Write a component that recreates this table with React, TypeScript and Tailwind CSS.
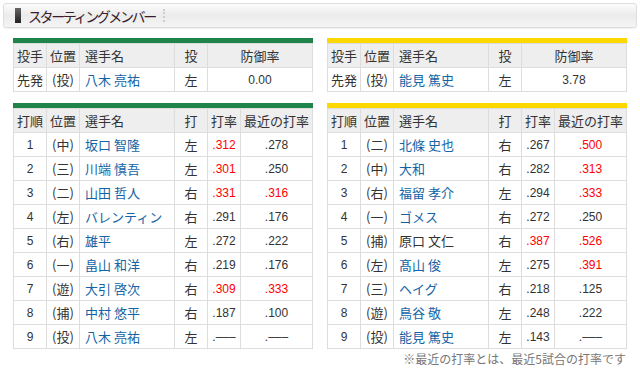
import React from "react";

type Batter = { no: number; pos: string; name: string; hand: string; avg: string; avgHot?: boolean; recent: string; recentHot?: boolean; purple?: boolean };

const jp = "font-['Noto_Sans_CJK_JP','Noto_Sans',sans-serif]";
const num = "font-['Liberation_Sans','Noto_Sans_CJK_JP',sans-serif] text-[12px]";

const swallows: Batter[] = [
  { no: 1, pos: "中", name: "坂口 智隆", hand: "左", avg: ".312", avgHot: true, recent: ".278" },
  { no: 2, pos: "三", name: "川端 慎吾", hand: "左", avg: ".301", avgHot: true, recent: ".250" },
  { no: 3, pos: "二", name: "山田 哲人", hand: "右", avg: ".331", avgHot: true, recent: ".316", recentHot: true },
  { no: 4, pos: "左", name: "バレンティン", hand: "右", avg: ".291", recent: ".176" },
  { no: 5, pos: "右", name: "雄平", hand: "左", avg: ".272", recent: ".222" },
  { no: 6, pos: "一", name: "畠山 和洋", hand: "右", avg: ".219", recent: ".176" },
  { no: 7, pos: "遊", name: "大引 啓次", hand: "右", avg: ".309", avgHot: true, recent: ".333", recentHot: true },
  { no: 8, pos: "捕", name: "中村 悠平", hand: "右", avg: ".187", recent: ".100" },
  { no: 9, pos: "投", name: "八木 亮祐", hand: "左", avg: ".–––", recent: ".–––" },
];

const tigers: Batter[] = [
  { no: 1, pos: "二", name: "北條 史也", hand: "右", avg: ".267", recent: ".500", recentHot: true },
  { no: 2, pos: "中", name: "大和", hand: "右", avg: ".282", recent: ".313", recentHot: true },
  { no: 3, pos: "右", name: "福留 孝介", hand: "左", avg: ".294", recent: ".333", recentHot: true },
  { no: 4, pos: "一", name: "ゴメス", hand: "右", avg: ".272", recent: ".250" },
  { no: 5, pos: "捕", name: "原口 文仁", hand: "右", avg: ".387", avgHot: true, recent: ".526", recentHot: true, purple: true },
  { no: 6, pos: "左", name: "髙山 俊", hand: "左", avg: ".275", recent: ".391", recentHot: true },
  { no: 7, pos: "三", name: "ヘイグ", hand: "右", avg: ".218", recent: ".125" },
  { no: 8, pos: "遊", name: "鳥谷 敬", hand: "左", avg: ".248", recent: ".222" },
  { no: 9, pos: "投", name: "能見 篤史", hand: "左", avg: ".143", recent: ".–––" },
];

const th = "h-[24px] border border-[#dddddd] bg-[#eeeeee] font-normal text-[#333] p-0";
const td = "h-[24px] border border-[#dddddd] bg-white text-[#333] p-0";

function PitcherTable({ bar, name, era }: { bar: string; name: string; era: string }) {
  return (
    <div className="w-[300px]">
      <div className={`h-[5px] ${bar}`} />
      <table className={`w-[300px] table-fixed border-collapse text-[13px] leading-none ${jp}`}>
        <colgroup>
          <col className="w-[33px]" />
          <col className="w-[33px]" />
          <col className="w-[95px]" />
          <col className="w-[33px]" />
          <col />
        </colgroup>
        <thead>
          <tr>
            <th className={`${th} text-center`}>投手</th>
            <th className={`${th} text-center`}>位置</th>
            <th className={`${th} text-left pl-[5px]`}>選手名</th>
            <th className={`${th} text-center`}>投</th>
            <th className={`${th} text-center`}>防御率</th>
          </tr>
        </thead>
        <tbody>
          <tr>
            <td className={`${td} text-center`}>先発</td>
            <td className={`${td} text-center`}>(投)</td>
            <td className={`${td} pl-[5px] text-[#1464a5]`}>{name}</td>
            <td className={`${td} text-center`}>左</td>
            <td className={`${td} text-center ${num}`}>{era}</td>
          </tr>
        </tbody>
      </table>
    </div>
  );
}

function LineupTable({ bar, rows }: { bar: string; rows: Batter[] }) {
  return (
    <div className="w-[300px]">
      <div className={`h-[5px] ${bar}`} />
      <table className={`w-[300px] table-fixed border-collapse text-[13px] leading-none ${jp}`}>
        <colgroup>
          <col className="w-[33px]" />
          <col className="w-[33px]" />
          <col className="w-[95px]" />
          <col className="w-[33px]" />
          <col className="w-[33px]" />
          <col />
        </colgroup>
        <thead>
          <tr>
            <th className={`${th} text-center`}>打順</th>
            <th className={`${th} text-center`}>位置</th>
            <th className={`${th} text-left pl-[5px]`}>選手名</th>
            <th className={`${th} text-center`}>打</th>
            <th className={`${th} text-center`}>打率</th>
            <th className={`${th} text-center`}>最近の打率</th>
          </tr>
        </thead>
        <tbody>
          {rows.map((r) => (
            <tr key={r.no}>
              <td className={`${td} text-center ${num}`}>{r.no}</td>
              <td className={`${td} text-center`}>({r.pos})</td>
              <td className={`${td} pl-[5px] ${r.purple ? "text-[#6a2a9c]" : "text-[#1464a5]"}`}>{r.name}</td>
              <td className={`${td} text-center`}>{r.hand}</td>
              <td className={`${td} text-center ${num} ${r.avgHot ? "text-[#ff0000]" : ""}`}>{r.avg}</td>
              <td className={`${td} text-center ${num} ${r.recentHot ? "text-[#ff0000]" : ""}`}>{r.recent}</td>
            </tr>
          ))}
        </tbody>
      </table>
    </div>
  );
}

export default function App() {
  return (
    <div className={`w-[640px] h-[377px] bg-white overflow-hidden pt-[3px] px-[3px] ${jp}`}>
      {/* title */}
      <div className="h-[25px] w-[634px] rounded-[3px] border border-[#dddddd] bg-gradient-to-b from-[#fcfcfc] via-[#ebebeb] to-[#f5f5f5] shadow-[0_1px_1px_rgba(0,0,0,0.06)] flex items-center pl-[11px]">
        <div className="w-[6px] h-[15px] bg-gradient-to-b from-[#666] to-[#222]" />
        <span className="ml-[7px] text-[14px] tracking-[-2.4px] text-[#3a1c2c] leading-none">スターティングメンバー</span>
        <div className="ml-[8px] h-[13px] border-l-2 border-dotted border-[#cccccc]" />
      </div>

      <div className="mt-[10px] ml-[10px] flex gap-[14px]">
        <PitcherTable bar="bg-[#1e844a]" name="八木 亮祐" era="0.00" />
        <PitcherTable bar="bg-[#fcd700]" name="能見 篤史" era="3.78" />
      </div>

      <div className="mt-[11px] ml-[10px] flex gap-[14px]">
        <LineupTable bar="bg-[#1e844a]" rows={swallows} />
        <LineupTable bar="bg-[#fcd700]" rows={tigers} />
      </div>

      <div className="w-[623px] mt-[4px] text-right text-[12px] text-[#777] leading-none">※最近の打率とは、最近5試合の打率です</div>
    </div>
  );
}
